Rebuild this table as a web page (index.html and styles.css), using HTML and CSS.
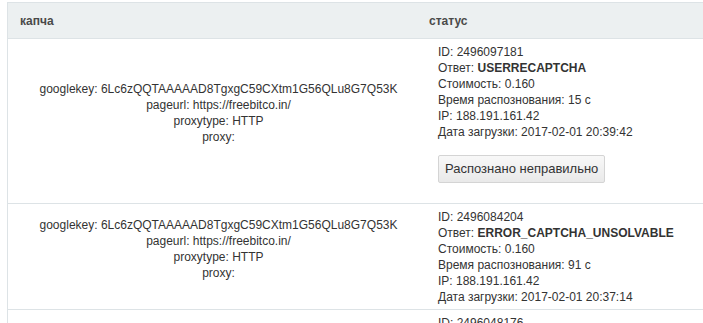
FILE: index.html
```html
<!DOCTYPE html>
<html lang="ru">
<head>
<meta charset="utf-8">
<title>Капчи</title>
<link rel="stylesheet" href="styles.css">
</head>
<body>
<table class="grid">
  <thead>
    <tr>
      <th class="col-captcha">капча</th>
      <th class="col-status">статус</th>
    </tr>
  </thead>
  <tbody>
    <tr>
      <td class="captcha">
        googlekey: 6Lc6zQQTAAAAAD8TgxgC59CXtm1G56QLu8G7Q53K<br>
        pageurl: https://freebitco.in/<br>
        proxytype: HTTP<br>
        proxy:
      </td>
      <td class="status">
        ID: 2496097181<br>
        Ответ: <b>USERRECAPTCHA</b><br>
        Стоимость: 0.160<br>
        Время распознования: 15 с<br>
        IP: 188.191.161.42<br>
        Дата загрузки: 2017-02-01 20:39:42
        <div class="actions"><button class="btn" type="button">Распознано неправильно</button></div>
      </td>
    </tr>
    <tr>
      <td class="captcha">
        googlekey: 6Lc6zQQTAAAAAD8TgxgC59CXtm1G56QLu8G7Q53K<br>
        pageurl: https://freebitco.in/<br>
        proxytype: HTTP<br>
        proxy:
      </td>
      <td class="status">
        ID: 2496084204<br>
        Ответ: <b>ERROR_CAPTCHA_UNSOLVABLE</b><br>
        Стоимость: 0.160<br>
        Время распознования: 91 с<br>
        IP: 188.191.161.42<br>
        Дата загрузки: 2017-02-01 20:37:14
      </td>
    </tr>
    <tr>
      <td class="captcha">
        googlekey: 6Lc6zQQTAAAAAD8TgxgC59CXtm1G56QLu8G7Q53K<br>
        pageurl: https://freebitco.in/<br>
        proxytype: HTTP<br>
        proxy:
      </td>
      <td class="status">
        ID: 2496048176<br>
        Ответ: <b>USERRECAPTCHA</b><br>
        Стоимость: 0.160<br>
        Время распознования: 20 с<br>
        IP: 188.191.161.42<br>
        Дата загрузки: 2017-02-01 20:33:05
      </td>
    </tr>
  </tbody>
</table>
</body>
</html>
```
FILE: styles.css
```css
html, body {
  margin: 0;
  background: #ffffff;
  overflow: hidden;
}
body {
  padding: 2px 0 0 7px;
  font-family: "Liberation Sans", Arial, sans-serif;
  font-size: 12px;
  line-height: 16px;
  color: #333333;
}
.grid {
  border-collapse: separate;
  border-spacing: 0;
  border-left: 1px solid #dde3e6;
  border-top: 1px solid #dde3e6;
  table-layout: fixed;
  width: 760px;
}
.grid th {
  background: #ecf0f1;
  color: #4a4a4a;
  font-weight: bold;
  text-align: left;
  padding: 10px 0 9px 12px;
  border-bottom: 1px solid #dde3e6;
}
.col-captcha {
  width: 397px;
}
.grid td {
  border-bottom: 1px solid #dde3e6;
}
.captcha {
  text-align: center;
  vertical-align: middle;
  padding: 5px 0 21px 12px;
}
.status {
  vertical-align: top;
  padding: 5px 0 4px 21px;
}
.status b {
  font-weight: bold;
  color: #333333;
}
.actions {
  margin: 15px 0 16px;
}
.btn {
  font-family: "Liberation Sans", Arial, sans-serif;
  font-size: 13px;
  line-height: 16px;
  color: #333333;
  height: 28px;
  padding: 0 6px;
  border: 1px solid #d4d4d4;
  border-radius: 2px;
  background: linear-gradient(#f8f8f8, #e9e9e9);
  cursor: pointer;
}
```
